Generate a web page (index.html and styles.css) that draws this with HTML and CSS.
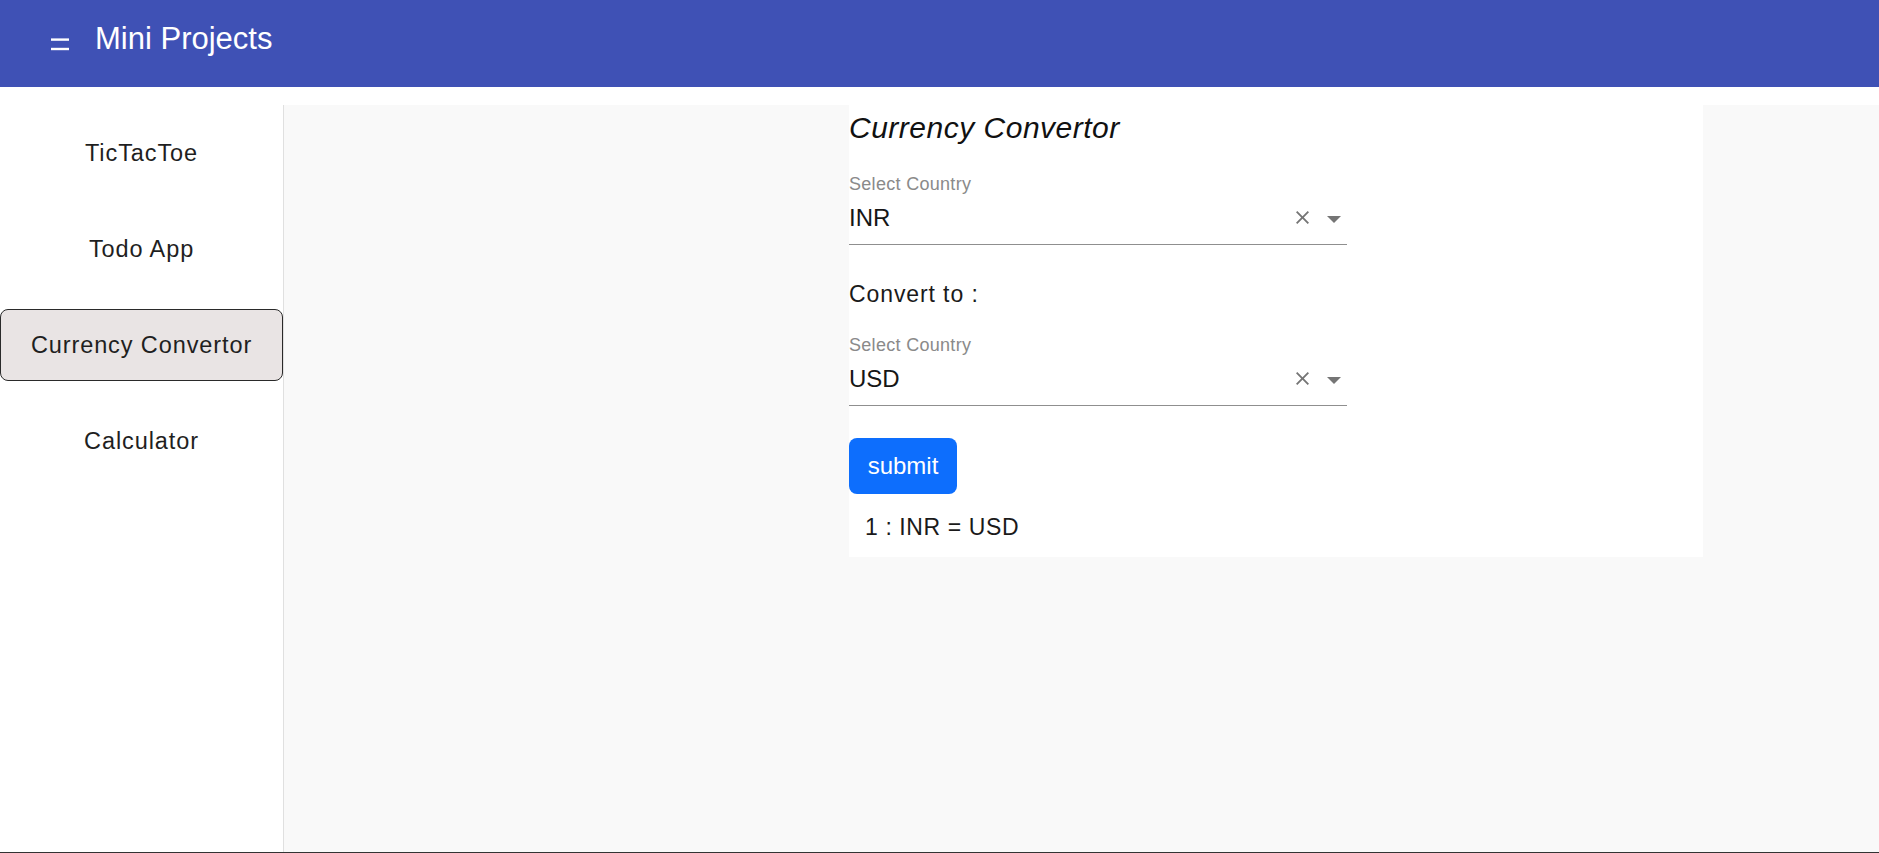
FILE: index.html
```html
<!DOCTYPE html>
<html lang="en">
<head>
<meta charset="utf-8">
<title>Mini Projects</title>
<link rel="stylesheet" href="styles.css">
</head>
<body>
<div class="page">
  <header class="appbar">
    <svg class="menu-icon" width="18" height="36" viewBox="0 0 18 36" aria-hidden="true">
      <rect x="0" y="17.4" width="18" height="2.4" fill="#fff"/>
      <rect x="0" y="26.8" width="18" height="2.4" fill="#fff"/>
    </svg>
    <div class="app-title">Mini Projects</div>
  </header>
  <div class="spacer"></div>
  <div class="body-row">
    <nav class="sidebar">
      <div class="nav-item">TicTacToe</div>
      <div class="nav-item">Todo App</div>
      <div class="nav-item active">Currency Convertor</div>
      <div class="nav-item">Calculator</div>
    </nav>
    <main class="content">
      <section class="panel">
        <h1 class="panel-title">Currency Convertor</h1>
        <div class="field first">
          <div class="field-label">Select Country</div>
          <div class="field-input">
            <span class="field-value">INR</span>
            <svg class="clear-icon" width="13" height="13" viewBox="5 5 14 14" aria-hidden="true"><path d="M19 6.41L17.590 5 12 10.59 6.41 5 5 6.41 10.59 12 5 17.59 6.41 19 12 13.41 17.59 19 19 17.59 13.41 12z" fill="#757575"/></svg>
            <svg class="drop-icon" width="14" height="7" viewBox="7 10 10 5" aria-hidden="true"><path d="M7 10l5 5 5-5z" fill="#757575"/></svg>
          </div>
        </div>
        <div class="convert-label">Convert to :</div>
        <div class="field second">
          <div class="field-label">Select Country</div>
          <div class="field-input">
            <span class="field-value">USD</span>
            <svg class="clear-icon" width="13" height="13" viewBox="5 5 14 14" aria-hidden="true"><path d="M19 6.41L17.59 5 12 10.59 6.41 5 5 6.41 10.59 12 5 17.59 6.41 19 12 13.41 17.59 19 19 17.59 13.41 12z" fill="#757575"/></svg>
            <svg class="drop-icon" width="14" height="7" viewBox="7 10 10 5" aria-hidden="true"><path d="M7 10l5 5 5-5z" fill="#757575"/></svg>
          </div>
        </div>
        <button class="submit-btn" type="button">submit</button>
        <div class="result">1 : INR = USD</div>
      </section>
    </main>
  </div>
  <div class="bottom-line"></div>
</div>
</body>
</html>
```

FILE: styles.css
```css
* { box-sizing: border-box; }

html, body {
  margin: 0;
  padding: 0;
  background: #ffffff;
  font-family: "Liberation Sans", Arial, sans-serif;
}

.page {
  width: 1879px;
  height: 853px;
  display: flex;
  flex-direction: column;
  overflow: hidden;
}

.appbar {
  height: 87px;
  flex: 0 0 87px;
  background: #3f51b5;
  display: flex;
  align-items: flex-start;
  padding: 21px 0 0 51px;
  gap: 26px;
}

.menu-icon { display: block; }

.app-title {
  color: #ffffff;
  font-size: 31px;
  line-height: 36px;
}

.spacer {
  height: 18px;
  flex: 0 0 18px;
}

.body-row {
  flex: 1 1 auto;
  display: flex;
  min-height: 0;
}

.sidebar {
  width: 284px;
  flex: 0 0 284px;
  border-right: 1px solid #e0e0e0;
  padding-top: 12px;
  display: flex;
  flex-direction: column;
  gap: 24px;
}

.nav-item {
  height: 72px;
  line-height: 70px;
  text-align: center;
  font-size: 23.5px;
  letter-spacing: 0.9px;
  color: #1f1f1f;
  border: 1px solid transparent;
  border-radius: 8px;
}

.nav-item.active {
  background: #e9e4e4;
  border-color: #2a2a2a;
}

.content {
  flex: 1 1 auto;
  background: #f9f9f9;
  padding-left: 565px;
  display: flex;
  align-items: flex-start;
}

.panel {
  width: 854px;
  background: #ffffff;
  padding: 5px 0 16px 0;
}

.panel-title {
  margin: 0;
  font-size: 30px;
  line-height: 36px;
  font-style: italic;
  font-weight: normal;
  color: #111111;
  letter-spacing: 0.5px;
}

.field {
  width: 498px;
}

.field.first { margin-top: 27px; }
.field.second { margin-top: 26px; }

.field-label {
  font-size: 18px;
  line-height: 22px;
  color: #8a8a8a;
  letter-spacing: 0.3px;
}

.field-input {
  margin-top: 7px;
  height: 43px;
  padding-bottom: 11px;
  border-bottom: 1px solid #8f8f8f;
  display: flex;
  align-items: center;
  padding-right: 6px;
}

.field-value {
  flex: 1 1 auto;
  font-size: 24px;
  line-height: 32px;
  color: #161616;
}

.clear-icon { display: block; }

.drop-icon {
  display: block;
  margin-left: 18px;
  margin-top: 3px;
}

.convert-label {
  margin-top: 35px;
  font-size: 23px;
  line-height: 28px;
  color: #1a1a1a;
  letter-spacing: 0.9px;
}

.submit-btn {
  display: block;
  margin-top: 32px;
  width: 108px;
  height: 56px;
  border: none;
  border-radius: 8px;
  background: #0d6efd;
  color: #ffffff;
  font-family: "Liberation Sans", Arial, sans-serif;
  font-size: 24px;
  padding: 0;
}

.result {
  margin-top: 19px;
  margin-left: 16px;
  font-size: 23px;
  line-height: 28px;
  color: #1a1a1a;
  letter-spacing: 0.6px;
  word-spacing: 0;
}

.bottom-line {
  height: 1px;
  flex: 0 0 1px;
  background: #333333;
}
```
